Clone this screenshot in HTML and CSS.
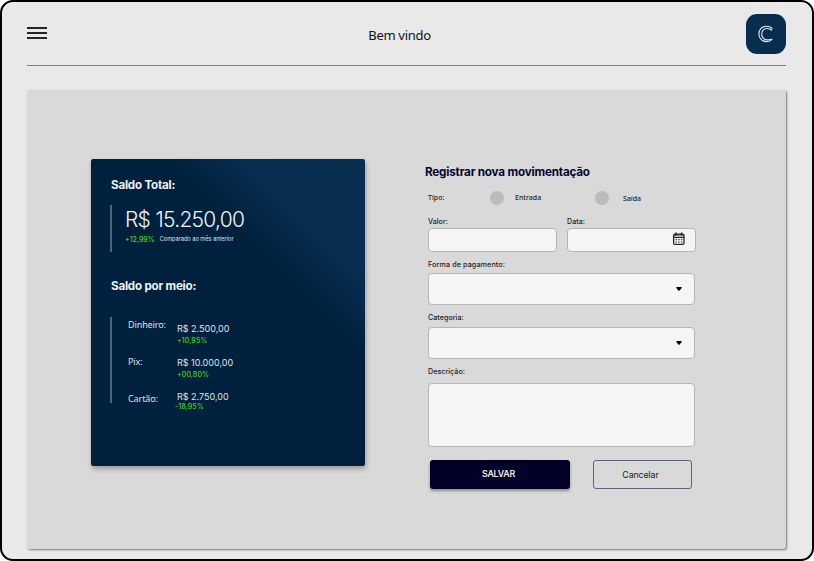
FILE: index.html
```html
<!DOCTYPE html>
<html lang="pt-BR">
<head>
<meta charset="utf-8">
<title>Bem vindo</title>
<link rel="stylesheet" href="styles.css">
</head>
<body>
<div class="frame">
  <header class="header">
    <div class="menu"><span></span><span></span><span></span></div>
    <h1 class="welcome">Bem vindo</h1>
    <div class="logo">
      <svg width="40" height="40" viewBox="0 0 40 40" fill="none" stroke="#dfe8ef">
        <path d="M26.2 14.5C24.5 12.8 22.8 12.2 20.6 12.2C16 12.2 12.9 15.5 12.9 19.9C12.9 24.4 16 27.6 20.6 27.6C22.8 27.6 24.7 26.9 26.2 25.2" stroke-width="1.1"/>
        <path d="M25.8 16.4C24.4 15.1 22.8 14.5 21 14.5C17.8 14.5 15.7 16.8 15.7 19.9C15.7 23.2 17.9 25.9 21 25.9C22.9 25.9 24.6 25.4 26.2 25.2" stroke-width="1.1"/>
        <path d="M26.2 14.5L25.2 16.3" stroke-width=".8"/>
      </svg>
    </div>
  </header>
  <main class="panel">
    <section class="card">
      <h2 class="card-title">Saldo Total:</h2>
      <div class="total">
        <div class="amount">R$ 15.250,00</div>
        <div class="compare"><span class="change">+12,99%</span><span class="note">Comparado ao mês anterior</span></div>
      </div>
      <h2 class="card-title">Saldo por meio:</h2>
      <div class="methods">
        <div class="method"><span class="name">Dinheiro:</span><div class="value">R$ 2.500,00<span class="change">+10,95%</span></div></div>
        <div class="method"><span class="name">Pix:</span><div class="value long">R$ 10.000,00<span class="change">+00,80%</span></div></div>
        <div class="method last"><span class="name">Cartão:</span><div class="value">R$ 2.750,00<span class="change">-18,95%</span></div></div>
      </div>
    </section>
    <form class="form">
      <h2 class="form-title">Registrar nova movimentação</h2>
      <div class="type">
        <span class="type-label">Tipo:</span>
        <i class="radio"></i><span class="in">Entrada</span>
        <i class="radio"></i><span class="out">Saída</span>
      </div>
      <div class="pair">
        <div><div class="label">Valor:</div><div class="input"></div></div>
        <div><div class="label">Data:</div><div class="input date">
          <svg width="14" height="14" viewBox="0 0 14 14" fill="none" stroke="#252525">
            <rect x="1.6" y="2.2" width="10.4" height="10.2" rx="1.4" stroke-width="1.3"/>
            <path d="M1.6 3H12M1.6 5.4H12" stroke-width="1.2"/>
            <path d="M4 .5V3.6M9.6 .5V3.6" stroke-width="1.5"/>
            <path d="M3.5 7.7H10.6M3.5 10H10.6" stroke-width="1" stroke-dasharray="1.5 1.2"/>
          </svg>
        </div></div>
      </div>
      <div class="label l-forma">Forma de pagamento:</div>
      <div class="select"><svg width="6" height="4" viewBox="0 0 6 4"><path d="M.8 0H5.2Q6 .1 5.6 1L3.6 3.5Q3 4 2.4 3.5L.4 1Q0 .1 .8 0Z"/></svg></div>
      <div class="label l-cat">Categoria:</div>
      <div class="select"><svg width="6" height="4" viewBox="0 0 6 4"><path d="M.8 0H5.2Q6 .1 5.6 1L3.6 3.5Q3 4 2.4 3.5L.4 1Q0 .1 .8 0Z"/></svg></div>
      <div class="label l-desc">Descrição:</div>
      <div class="textarea"></div>
      <div class="actions">
        <button type="button" class="save">SALVAR</button>
        <button type="button" class="cancel">Cancelar</button>
      </div>
    </form>
  </main>
</div>
</body>
</html>
```

FILE: styles.css
```css
* { box-sizing: border-box; }
body { margin: 0; background: #fff; font-family: Inter, "Liberation Sans", sans-serif; }
h1, h2 { margin: 0; }
.frame { width: 814px; height: 561px; border: 2px solid #000; border-radius: 13px; background: #e9e9e9; padding: 0 25px; overflow: hidden; }
.header { height: 64px; width: 759px; display: grid; grid-template-columns: 1fr auto 1fr; align-items: start; border-bottom: 1px solid #808080; }
.menu { width: 20px; display: grid; gap: 3px; padding-top: 25px; }
.menu span { height: 2px; background: #2b2229; }
.welcome { font: 400 13px/20px "Noto Sans", sans-serif; letter-spacing: -.3px; color: #111; padding-top: 23px; margin-right: 14px; white-space: nowrap; }
.logo { justify-self: end; width: 40px; height: 40px; margin-top: 12px; border-radius: 11px; background: #092d4e; }
.logo svg { display: block; }
.panel { width: 759px; height: 459px; margin-top: 24px; padding: 69px 0 0 64px; display: flex; align-items: flex-start; background: #d9d9d9; border-radius: 3px; box-shadow: 1px 1px 2px #777; }

.card { flex: none; width: 274px; height: 307px; padding: 18px 0 0 19px; border-radius: 2px; color: #eef4f8; background: linear-gradient(45deg, #00213d 0%, #00213d 66%, #082d50 79%, #082f50 100%); box-shadow: 1px 3px 5px rgba(0,0,0,.28); }
.card-title { padding-left: 1px; font-size: 11.6px; line-height: 16px; font-weight: 700; white-space: nowrap; letter-spacing: -.2px; }
.total { height: 47px; margin: 12px 0 26px; padding: 1px 0 0 13px; border-left: 2px solid #4b6478; }
.amount { font-weight: 300; font-size: 21px; line-height: 27px; letter-spacing: -.7px; white-space: nowrap; }
.change { color: #3fdc0b; font-size: 7px; line-height: 9px; font-weight: 500; }
.compare { display: flex; gap: 5px; height: 10px; margin-top: 1px; align-items: center; white-space: nowrap; }
.note { font-size: 5.6px; color: #dce4ec; }
.methods { height: 86px; margin-top: 23px; padding-left: 16px; border-left: 2px solid #4b6478; }
.method { height: 34px; display: flex; }
.name { width: 49px; margin-top: 1px; font: 400 9px/14px "Noto Sans", sans-serif; letter-spacing: -.1px; color: #dce4ec; white-space: nowrap; }
.method:nth-child(2) .name { margin-top: 4px; }
.method.last .name { margin-top: 7px; }
.value { padding-top: 6px; font-size: 9px; line-height: 12px; color: #dce4ec; white-space: nowrap; }
.value .change { display: block; margin-top: 1px; letter-spacing: .1px; }
.last .change { margin: -1px 0 0 -2px; }
.method.last .value { padding-top: 6px; }

.form { flex: none; width: 267px; margin: 1px 0 0 63px; color: #242424; }
.form-title { margin-left: -3px; padding-top: 2px; height: 20px; font-size: 11.7px; line-height: 20px; font-weight: 700; letter-spacing: -.2px; color: #05052f; white-space: nowrap; }
.type { display: flex; align-items: center; height: 14px; margin-top: 11px; font: 500 7px/14px "Noto Sans", sans-serif; }
.type-label { width: 62px; }
.radio { width: 14px; height: 14px; border-radius: 50%; background: #bbb; }
.in { width: 80px; margin-left: 11px; }
.out { margin-left: 14px; padding-top: 1px; }
.pair { display: grid; grid-template-columns: 129px 129px; column-gap: 10px; margin-top: 9px; }
.label { height: 14px; padding-top: 1px; font-size: 7.2px; line-height: 14px; font-weight: 500; white-space: nowrap; }
.l-forma { letter-spacing: .1px; }
.input, .select, .textarea { background: #f5f5f5; border: 1px solid #b5b5b5; border-radius: 4px; }
.input { height: 24px; }
.date { display: flex; align-items: center; justify-content: flex-end; padding: 0 9px 2px 0; }
.l-forma { margin-top: 5px; }
.select { height: 32px; margin-top: 2px; display: flex; align-items: center; justify-content: flex-end; padding-right: 12px; }
.select + .label { margin-top: 5px; }
.l-cat + .select { margin-top: 3px; }
.textarea { height: 64px; margin-top: 5px; }
.actions { display: flex; gap: 23px; margin: 13px 0 0 2px; }
.actions button { height: 29px; font-family: Inter, sans-serif; font-size: 8.8px; border-radius: 3px; }
.actions .save { width: 140px; padding: 0 3px 2px 0; border: 0; background: #000028; color: #eee; font-weight: 600; letter-spacing: -.2px; box-shadow: 0 2px 3px rgba(0,0,0,.35); }
.actions .cancel { width: 99px; padding: 0 4px 0 0; border: 1px solid #5e6480; background: #d9d9d9; color: #222; font-weight: 400; letter-spacing: -.1px; }
```
